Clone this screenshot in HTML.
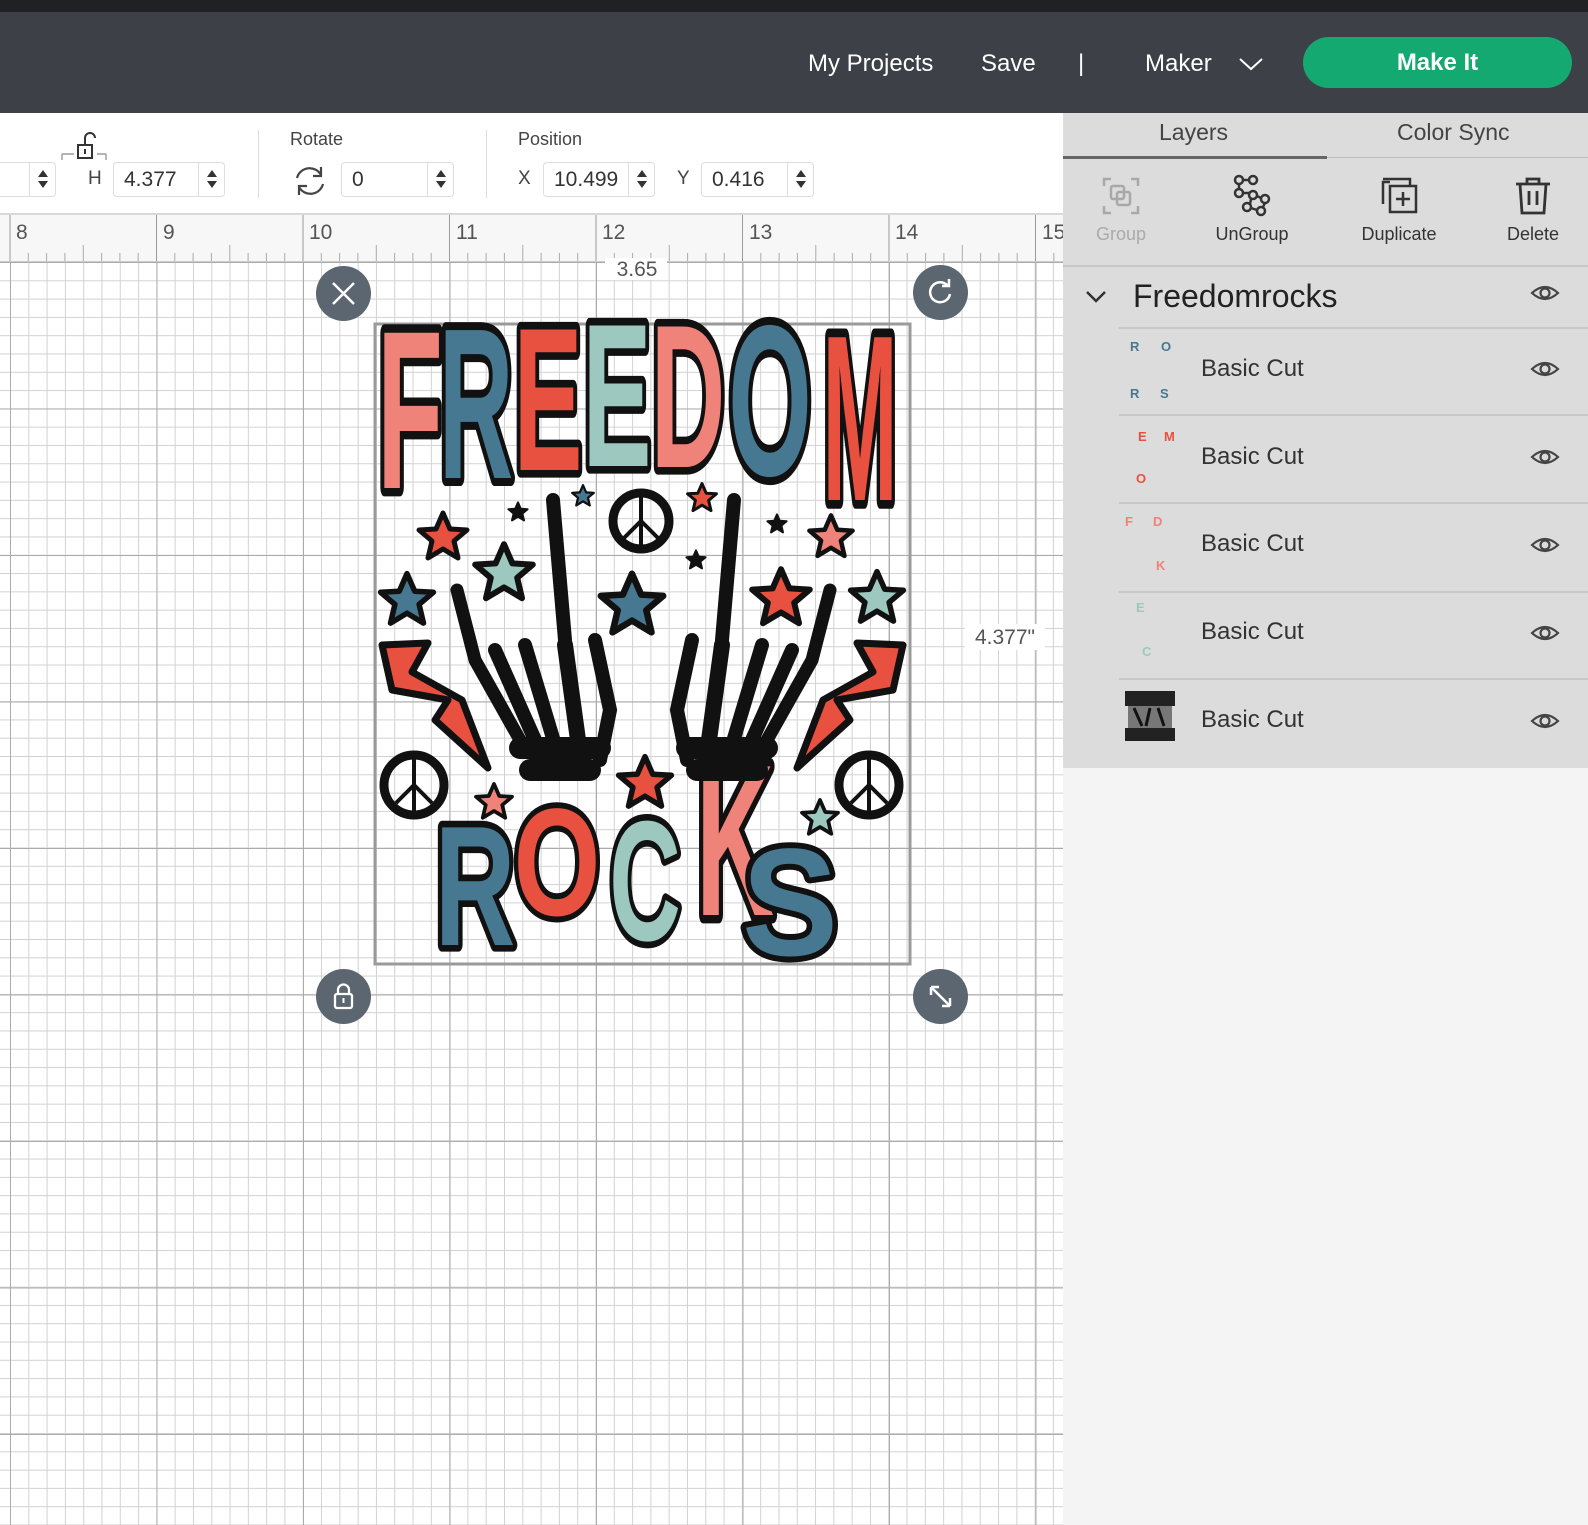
<!DOCTYPE html>
<html><head><meta charset="utf-8"><style>
*{margin:0;padding:0;box-sizing:border-box}
body{width:1588px;height:1525px;overflow:hidden;position:relative;background:#fff;font-family:"Liberation Sans",sans-serif}
.abs{position:absolute}
#top{left:0;top:0;width:1588px;height:12px;background:#1f2124}
#hdr{left:0;top:12px;width:1588px;height:101px;background:#3d4047}
.ht{position:absolute;color:#fff;font-size:24px;top:38px}
#mk{left:1303px;top:37px;width:269px;height:51px;border-radius:26px;background:#14a970;color:#fff;font-size:24px;font-weight:bold;text-align:center;line-height:51px}
#tb{left:0;top:113px;width:1063px;height:102px;background:#fff;border-bottom:2px solid #d8d8d8}
.lbl{position:absolute;font-size:18px;color:#444}
.inp{position:absolute;height:35px;border:1px solid #ddd;border-radius:4px;font-size:21px;color:#333;line-height:33px;padding-left:10px;background:#fff}
.sp{position:absolute;right:0;top:0;width:26px;height:33px;border-left:1px solid #ddd}
.sp:before{content:"";position:absolute;left:8px;top:7px;border:5px solid transparent;border-bottom:7px solid #333;border-top:0}
.sp:after{content:"";position:absolute;left:8px;top:18px;border:5px solid transparent;border-top:7px solid #333;border-bottom:0}
.div{position:absolute;top:130px;width:1px;height:68px;background:#ddd}
#ruler{left:0;top:215px;width:1063px;height:47px;background:#f7f7f7;border-bottom:1px solid #ccc;overflow:hidden}
.rn{position:absolute;top:6px;font-size:21px;color:#555}
#canvas{left:0;top:262px;width:1063px;height:1263px;background-color:#fff;
background-image:
linear-gradient(90deg,#ababab 1px,transparent 1px),
linear-gradient(#ababab 1px,transparent 1px),
linear-gradient(90deg,#d2d2d2 1px,transparent 1px),
linear-gradient(#d2d2d2 1px,transparent 1px);
background-size:146.5px 146.5px,146.5px 146.5px,18.31px 18.31px,18.31px 18.31px;
background-position:10px 0,0 0,10px 0,0 0}
#panel{left:1063px;top:113px;width:525px;height:1412px;background:#f4f4f4}
#pg{left:1063px;top:113px;width:525px;height:655px;background:#dcdcdc}
.tab{position:absolute;top:119px;font-size:23px;color:#444}
.tl{position:absolute;top:224px;font-size:18px;color:#333;transform:translateX(-50%);white-space:nowrap}
.row{position:absolute;left:1119px;width:469px;border-top:2px solid #c8c8c8}
.bc{position:absolute;left:1201px;font-size:24px;color:#333}
.hnd{position:absolute;width:55px;height:55px;border-radius:50%;background:#5c6670}
</style></head><body>
<div id="top" class="abs"></div>
<div id="hdr" class="abs">
<div class="ht" style="left:808px">My Projects</div>
<div class="ht" style="left:981px">Save</div>
<div class="ht" style="left:1078px">|</div>
<div class="ht" style="left:1145px">Maker</div>
<svg class="abs" style="left:1238px;top:44px" width="26" height="16"><path d="M2 3 L13 13 L24 3" fill="none" stroke="#fff" stroke-width="2"/></svg>
</div>
<div id="mk" class="abs">Make It</div>

<div id="tb" class="abs"></div>
<div class="inp" style="left:-10px;top:162px;width:66px"><div class="sp"></div></div>
<svg class="abs" style="left:60px;top:132px" width="50" height="30"><path d="M2 22 H14 M37 22 H46 M46 22 V28 M2 22 V28" stroke="#888" fill="none" stroke-width="1.2"/><rect x="18" y="13" width="14" height="13" fill="none" stroke="#333" stroke-width="2"/><path d="M25 13 V6 a5 5 0 0 1 10 0" fill="none" stroke="#333" stroke-width="2"/><rect x="24" y="17" width="2" height="5" fill="#333"/></svg>
<div class="lbl" style="left:88px;top:168px;font-size:19px">H</div>
<div class="inp" style="left:113px;top:162px;width:112px">4.377<div class="sp"></div></div>
<div class="div" style="left:258px"></div>
<div class="lbl" style="left:290px;top:129px">Rotate</div>
<svg class="abs" style="left:292px;top:163px" width="36" height="36"><path d="M5 15 A13 13 0 0 1 29 12 M31 21 A13 13 0 0 1 7 24" fill="none" stroke="#444" stroke-width="2.2"/><path d="M29 4 V13 H21 M7 32 V23 H15" fill="none" stroke="#444" stroke-width="2.2"/></svg>
<div class="inp" style="left:341px;top:162px;width:113px">0<div class="sp"></div></div>
<div class="div" style="left:486px"></div>
<div class="lbl" style="left:518px;top:129px">Position</div>
<div class="lbl" style="left:518px;top:168px;font-size:19px">X</div>
<div class="inp" style="left:543px;top:162px;width:112px">10.499<div class="sp"></div></div>
<div class="lbl" style="left:677px;top:168px;font-size:19px">Y</div>
<div class="inp" style="left:701px;top:162px;width:113px">0.416<div class="sp"></div></div>

<div id="ruler" class="abs">
<svg class="abs" style="left:0;top:0" width="1063" height="47">
<path d="M10 0V47M156.5 0V47M303 0V47M449.5 0V47M596 0V47M742.5 0V47M889 0V47M1035.5 0V47" stroke="#999"/>
<g stroke="#aaa">
<path d="M28.3 38V47M46.6 38V47M64.9 38V47M83.3 30V47M101.6 38V47M119.9 38V47M138.2 38V47
M174.8 38V47M193.1 38V47M211.4 38V47M229.8 30V47M248.1 38V47M266.4 38V47M284.7 38V47
M321.3 38V47M339.6 38V47M357.9 38V47M376.3 30V47M394.6 38V47M412.9 38V47M431.2 38V47
M467.8 38V47M486.1 38V47M504.4 38V47M522.8 30V47M541.1 38V47M559.4 38V47M577.7 38V47
M614.3 38V47M632.6 38V47M650.9 38V47M669.3 30V47M687.6 38V47M705.9 38V47M724.2 38V47
M760.8 38V47M779.1 38V47M797.4 38V47M815.8 30V47M834.1 38V47M852.4 38V47M870.7 38V47
M907.3 38V47M925.6 38V47M943.9 38V47M962.3 30V47M980.6 38V47M998.9 38V47M1017.2 38V47
M1053.8 38V47"/>
</g></svg>
<div class="rn" style="left:16px">8</div><div class="rn" style="left:163px">9</div><div class="rn" style="left:309px">10</div><div class="rn" style="left:456px">11</div><div class="rn" style="left:602px">12</div><div class="rn" style="left:749px">13</div><div class="rn" style="left:895px">14</div><div class="rn" style="left:1042px">15</div>
</div>

<div id="canvas" class="abs"></div>

<svg class="abs" style="left:0;top:0" width="1063" height="1525">
<rect x="375" y="324" width="535" height="640" fill="none" stroke="#9a9a9a" stroke-width="3"/>
<rect x="605" y="258" width="62" height="22" fill="#fff"/>
<text x="637" y="276" font-size="21" fill="#555" text-anchor="middle" font-family="Liberation Sans">3.65</text>
<rect x="965" y="624" width="80" height="26" fill="#fff"/>
<text x="1005" y="644" font-size="21" fill="#555" text-anchor="middle" font-family="Liberation Sans">4.377"</text>
<g font-family="Liberation Sans" font-weight="bold" font-size="215" stroke="#111" stroke-width="16" paint-order="stroke" stroke-linejoin="round" text-anchor="middle">
<text transform="translate(410,488) scale(0.5,1.05)" fill="#ef8379">F</text>
<text transform="translate(476,478) scale(0.48,1)" fill="#477891">R</text>
<text transform="translate(548,470) scale(0.48,0.95)" fill="#e8503f">E</text>
<text transform="translate(617,466) scale(0.48,0.95)" fill="#9cc8c0">E</text>
<text transform="translate(688,467) scale(0.48,0.95)" fill="#ef8379">D</text>
<text transform="translate(770,475) scale(0.5,1)" fill="#477891">O</text>
<text transform="translate(860,500) scale(0.42,1.1)" fill="#e8503f">M</text>
</g>
<g font-family="Liberation Sans" font-weight="bold" font-size="180" stroke="#111" stroke-width="14" paint-order="stroke" stroke-linejoin="round" text-anchor="middle">
<text transform="translate(475,945) scale(0.62,0.95)" fill="#477891">R</text>
<text transform="translate(557,915) scale(0.62,0.85)" fill="#e8503f">O</text>
<text transform="translate(645,940) scale(0.55,0.95)" fill="#9cc8c0">C</text>
<text transform="translate(735,915) scale(0.6,1.2)" fill="#ef8379">K</text>
<text transform="translate(790,955) scale(0.8,0.85)" fill="#477891">S</text>
</g>
<g stroke="#111" stroke-width="7" stroke-linejoin="round">
<path d="M382 645 L428 643 L412 672 L462 700 L488 768 L435 720 L448 700 L392 690 Z" fill="#e8503f"/>
<path d="M903 645 L857 643 L873 672 L823 700 L797 768 L850 720 L837 700 L893 690 Z" fill="#e8503f"/>
</g>
<g fill="none" stroke="#111" stroke-width="9">
<circle cx="641" cy="521" r="28"/><circle cx="414" cy="785" r="30"/><circle cx="869" cy="785" r="30"/>
</g>
<g fill="none" stroke="#111" stroke-width="4">
<path d="M641 497V545M641 521L624 538M641 521L658 538"/>
<path d="M414 759V811M414 785L396 803M414 785L432 803"/>
<path d="M869 759V811M869 785L851 803M869 785L887 803"/>
</g>
<g stroke="#111" stroke-width="5" stroke-linejoin="round">
<path d="M0 -24 L7 -8 L24 -7 L11 4 L15 21 L0 12 L-15 21 L-11 4 L-24 -7 L-7 -8Z" fill="#e8503f" transform="translate(443,537)"/>
<path d="M0 -24 L7 -8 L24 -7 L11 4 L15 21 L0 12 L-15 21 L-11 4 L-24 -7 L-7 -8Z" fill="#9cc8c0" transform="translate(504,573) scale(1.2)"/>
<path d="M0 -24 L7 -8 L24 -7 L11 4 L15 21 L0 12 L-15 21 L-11 4 L-24 -7 L-7 -8Z" fill="#477891" transform="translate(407,600) scale(1.1)"/>
<path d="M0 -24 L7 -8 L24 -7 L11 4 L15 21 L0 12 L-15 21 L-11 4 L-24 -7 L-7 -8Z" fill="#477891" transform="translate(632,605) scale(1.3)"/>
<path d="M0 -24 L7 -8 L24 -7 L11 4 L15 21 L0 12 L-15 21 L-11 4 L-24 -7 L-7 -8Z" fill="#e8503f" transform="translate(781,598) scale(1.2)"/>
<path d="M0 -24 L7 -8 L24 -7 L11 4 L15 21 L0 12 L-15 21 L-11 4 L-24 -7 L-7 -8Z" fill="#9cc8c0" transform="translate(877,598) scale(1.1)"/>
<path d="M0 -24 L7 -8 L24 -7 L11 4 L15 21 L0 12 L-15 21 L-11 4 L-24 -7 L-7 -8Z" fill="#ef8379" transform="translate(831,537) scale(0.9)"/>
<path d="M0 -24 L7 -8 L24 -7 L11 4 L15 21 L0 12 L-15 21 L-11 4 L-24 -7 L-7 -8Z" fill="#e8503f" transform="translate(702,498) scale(0.6)"/>
<path d="M0 -24 L7 -8 L24 -7 L11 4 L15 21 L0 12 L-15 21 L-11 4 L-24 -7 L-7 -8Z" fill="#477891" transform="translate(583,496) scale(0.45)"/>
<path d="M0 -24 L7 -8 L24 -7 L11 4 L15 21 L0 12 L-15 21 L-11 4 L-24 -7 L-7 -8Z" fill="#111" transform="translate(518,512) scale(0.4)"/>
<path d="M0 -24 L7 -8 L24 -7 L11 4 L15 21 L0 12 L-15 21 L-11 4 L-24 -7 L-7 -8Z" fill="#111" transform="translate(777,524) scale(0.4)"/>
<path d="M0 -24 L7 -8 L24 -7 L11 4 L15 21 L0 12 L-15 21 L-11 4 L-24 -7 L-7 -8Z" fill="#111" transform="translate(696,560) scale(0.4)"/>
<path d="M0 -24 L7 -8 L24 -7 L11 4 L15 21 L0 12 L-15 21 L-11 4 L-24 -7 L-7 -8Z" fill="#e8503f" transform="translate(645,783) scale(1.1)"/>
<path d="M0 -24 L7 -8 L24 -7 L11 4 L15 21 L0 12 L-15 21 L-11 4 L-24 -7 L-7 -8Z" fill="#ef8379" transform="translate(494,802) scale(0.75)"/>
<path d="M0 -24 L7 -8 L24 -7 L11 4 L15 21 L0 12 L-15 21 L-11 4 L-24 -7 L-7 -8Z" fill="#9cc8c0" transform="translate(820,818) scale(0.75)"/>
</g>
<g stroke="#111" stroke-linecap="round" fill="none">
<path d="M553 500 L565 640" stroke-width="14"/>
<path d="M565 645 L578 740" stroke-width="16"/>
<path d="M457 590 L475 660 L520 740" stroke-width="13"/>
<path d="M495 650 L535 740" stroke-width="14"/>
<path d="M525 645 L555 745" stroke-width="14"/>
<path d="M595 640 L610 710 L600 760" stroke-width="14"/>
<path d="M530 770 L590 770" stroke-width="22"/>
<path d="M520 748 L600 748" stroke-width="22"/>
<path d="M734 500 L722 640" stroke-width="14"/>
<path d="M722 645 L709 740" stroke-width="16"/>
<path d="M830 590 L812 660 L767 740" stroke-width="13"/>
<path d="M792 650 L752 740" stroke-width="14"/>
<path d="M762 645 L732 745" stroke-width="14"/>
<path d="M692 640 L677 710 L687 760" stroke-width="14"/>
<path d="M697 770 L757 770" stroke-width="22"/>
<path d="M687 748 L767 748" stroke-width="22"/>
</g>
</svg>

<div class="hnd" style="left:316px;top:266px"></div>
<svg class="abs" style="left:329px;top:279px" width="29" height="29"><path d="M4 4L25 25M25 4L4 25" stroke="#fff" stroke-width="2.5"/></svg>
<div class="hnd" style="left:913px;top:265px"></div>
<svg class="abs" style="left:926px;top:278px" width="29" height="29"><path d="M22 8 A10 10 0 1 0 24 16" fill="none" stroke="#fff" stroke-width="2.5"/><path d="M16 8 H23 V1" fill="none" stroke="#fff" stroke-width="2.5"/></svg>
<div class="hnd" style="left:316px;top:969px"></div>
<svg class="abs" style="left:329px;top:982px" width="29" height="29"><rect x="6" y="12" width="17" height="14" rx="2" fill="none" stroke="#fff" stroke-width="2.3"/><path d="M9 12V8a5.5 5.5 0 0 1 11 0v4" fill="none" stroke="#fff" stroke-width="2.3"/><path d="M14.5 16v5" stroke="#fff" stroke-width="2"/></svg>
<div class="hnd" style="left:913px;top:969px"></div>
<svg class="abs" style="left:926px;top:982px" width="29" height="29"><path d="M5 5L24 24M5 5V13M5 5H13M24 24V16M24 24H16" fill="none" stroke="#fff" stroke-width="2.5"/></svg>

<div id="panel" class="abs"></div>
<div id="pg" class="abs"></div>
<div class="tab" style="left:1159px">Layers</div>
<div class="tab" style="left:1397px">Color Sync</div>
<div class="abs" style="left:1063px;top:157px;width:525px;height:1px;background:#bbb"></div>
<div class="abs" style="left:1063px;top:156px;width:264px;height:3px;background:#666"></div>
<svg class="abs" style="left:1101px;top:176px" width="40" height="40"><path d="M3 10V3H10M30 3H37V10M37 30V37H30M10 37H3V30" fill="none" stroke="#a8a8a8" stroke-width="2.5"/><rect x="10" y="10" width="13" height="13" rx="2" fill="none" stroke="#a8a8a8" stroke-width="2.5"/><rect x="16" y="16" width="13" height="13" rx="2" fill="none" stroke="#a8a8a8" stroke-width="2.5"/></svg>
<svg class="abs" style="left:1231px;top:173px" width="42" height="44"><g fill="none" stroke="#333" stroke-width="2.5"><circle cx="8" cy="7" r="4"/><circle cx="22" cy="7" r="4"/><circle cx="8" cy="20" r="4"/><circle cx="22" cy="22" r="4"/><circle cx="34" cy="26" r="4"/><circle cx="16" cy="34" r="4"/><circle cx="30" cy="38" r="4"/><path d="M12 7H18M8 11V16M12 20H18M26 23L30 25M19 31L20 26M20 35L26 37M34 30L32 34"/></g></svg>
<svg class="abs" style="left:1380px;top:176px" width="40" height="40"><g fill="none" stroke="#333" stroke-width="2.5"><path d="M10 6H3V28"/><path d="M3 3H30V10"/><rect x="10" y="10" width="26" height="26"/><path d="M23 16V30M16 23H30"/></g></svg>
<svg class="abs" style="left:1513px;top:175px" width="40" height="42"><g fill="none" stroke="#333" stroke-width="2.8"><path d="M3 9H37M14 9V4H26V9M7 9L9 38H31L33 9M16 16V30M24 16V30"/></g></svg>
<div class="tl" style="left:1121px;color:#aaa">Group</div>
<div class="tl" style="left:1252px">UnGroup</div>
<div class="tl" style="left:1399px">Duplicate</div>
<div class="tl" style="left:1533px">Delete</div>
<div class="abs" style="left:1063px;top:265px;width:525px;height:2px;background:#c8c8c8"></div>
<svg class="abs" style="left:1085px;top:290px" width="22" height="14"><path d="M2 2L11 11L20 2" fill="none" stroke="#333" stroke-width="2.5"/></svg>
<div class="abs" style="left:1133px;top:278px;font-size:32px;color:#222">Freedomrocks</div>
<div class="row" style="top:327px"></div>
<div class="row" style="top:414px"></div>
<div class="row" style="top:502px"></div>
<div class="row" style="top:591px"></div>
<div class="row" style="top:678px"></div>
<div class="bc" style="top:355px">Basic Cut</div>
<div class="bc" style="top:443px">Basic Cut</div>
<div class="bc" style="top:530px">Basic Cut</div>
<div class="bc" style="top:618px">Basic Cut</div>
<div class="bc" style="top:706px">Basic Cut</div>
<svg class="abs" style="left:1120px;top:336px" width="60" height="425">
<g font-family="Liberation Sans" font-weight="bold" font-size="13">
<text x="10" y="15" fill="#477891">R</text><text x="41" y="15" fill="#477891">O</text><text x="10" y="62" fill="#477891">R</text><text x="40" y="62" fill="#477891">S</text>
<text x="18" y="105" fill="#e8503f">E</text><text x="44" y="105" fill="#e8503f">M</text><text x="16" y="147" fill="#e8503f">O</text>
<text x="5" y="190" fill="#ef8379">F</text><text x="33" y="190" fill="#ef8379">D</text><text x="36" y="234" fill="#ef8379">K</text>
<text x="16" y="276" fill="#9cc8c0">E</text><text x="22" y="320" fill="#9cc8c0">C</text>
</g>
<rect x="5" y="355" width="50" height="15" fill="#222"/>
<rect x="8" y="370" width="44" height="22" fill="#777"/>
<path d="M14 372 L22 390 M30 372 L26 390 M38 372 L44 390" stroke="#111" stroke-width="3"/>
<rect x="5" y="392" width="50" height="13" fill="#222"/>
</svg>
<svg class="abs" style="left:1530px;top:283px" width="30" height="460"><g fill="none" stroke="#444" stroke-width="2.2"><g id="eye"><path d="M2 10 Q15 -2 28 10 Q15 22 2 10Z"/><circle cx="15" cy="10" r="4.5"/></g><use href="#eye" y="76"/><use href="#eye" y="164"/><use href="#eye" y="252"/><use href="#eye" y="340"/><use href="#eye" y="428"/></g></svg>
</body></html>
